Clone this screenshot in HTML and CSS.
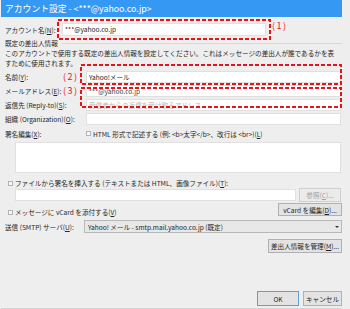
FILE: index.html
```html
<!DOCTYPE html>
<html lang="ja">
<head>
<meta charset="utf-8">
<title>アカウント設定</title>
<link rel="stylesheet" href="styles.css">
</head>
<body>
<div class="window">
  <div class="titlebar">アカウント設定 - &lt;***@yahoo.co.jp&gt;</div>
  <div class="content">
    <div class="account-row">
      <span class="acc-label">アカウント名(<u>N</u>):</span>
      <div class="field acc-field">***@yahoo.co.jp</div>
    </div>
    <div class="group-head"><span>既定の差出人情報</span><span class="rule"></span></div>
    <p class="desc">このアカウントで使用する既定の差出人情報を設定してください。これはメッセージの差出人が誰であるかを表<br>すために使用されます。</p>
    <div class="form-grid">
      <span class="lbl">名前(<u>Y</u>):</span><div class="field">Yahoo!メール</div>
      <span class="lbl">メールアドレス(<u>E</u>):</span><div class="field muted">***@yahoo.co.jp</div>
      <span class="lbl">返信先 (Reply-to)(<u>S</u>):</span><div class="field placeholder">受信者からの返信を受け取るアドレス</div>
      <span class="lbl">組織 (Organization)(<u>O</u>):</span><div class="field"></div>
    </div>
    <div class="sig-row">
      <span class="sig-label">署名編集(<u>X</u>):</span>
      <span class="check"><span class="box"></span>HTML 形式で記述する (例: &lt;b&gt;太字&lt;/b&gt;、改行は &lt;br&gt;)(<u>L</u>)</span>
    </div>
    <div class="textarea"></div>
    <div class="check-row"><span class="box"></span>ファイルから署名を挿入する (テキストまたは HTML、画像ファイル)(<u>T</u>):</div>
    <div class="file-row">
      <div class="field file-field"></div>
      <div class="btn disabled browse">参照(<u>C</u>)...</div>
    </div>
    <div class="vcard-row">
      <span class="check-inline"><span class="box"></span>メッセージに vCard を添付する(<u>V</u>)</span>
      <div class="btn vcard-btn">vCard を編集(<u>D</u>)...</div>
    </div>
    <div class="smtp-row">
      <span class="smtp-label">送信 (SMTP) サーバ(<u>U</u>):</span>
      <div class="select"><span>Yahoo! メール - smtp.mail.yahoo.co.jp (既定)</span><span class="arrow"></span></div>
    </div>
    <div class="manage-row">
      <div class="btn manage-btn">差出人情報を管理(<u>M</u>)...</div>
    </div>
    <div class="footer">
      <div class="btn ok-btn">OK</div>
      <div class="btn cancel-btn">キャンセル</div>
    </div>
  </div>

  <div class="redbox box1"><svg width="214" height="21"><rect x="1" y="1" width="212" height="19" class="dash"/></svg></div>
  <div class="redbox box2"><svg width="262" height="21"><rect x="1" y="1" width="260" height="19" class="dash"/></svg></div>
  <div class="redbox box3"><svg width="262" height="21"><rect x="1" y="1" width="260" height="19" class="dash"/></svg></div>
  <span class="redlabel l1">(1)</span>
  <span class="redlabel l2">(2)</span>
  <span class="redlabel l3">(3)</span>
</div>
</body>
</html>
```

FILE: styles.css
```css
* { box-sizing: border-box; }
html, body { margin: 0; padding: 0; }
body {
  background: #eeeeee;
  font-family: "Noto Sans CJK JP", "Noto Sans", sans-serif;
  font-size: 6.6px;
  color: #262626;
  overflow: hidden;
  width: 350px;
  height: 309px;
}
u { text-decoration: underline; }
.window {
  position: relative;
  width: 341px;
  height: 309px;
  margin-left: 1px;
  border-bottom: 1px solid #d4d4d4;
}
.titlebar {
  height: 17px;
  background: #3599f4;
  color: #fff;
  font-size: 8.8px;
  line-height: 17px;
  padding-left: 4px;
  white-space: nowrap;
}
.content {
  padding: 0 0 0 4px;
  width: 341px;
}
.field {
  height: 12px;
  background: #fff;
  border: 1px solid #e0e0e0;
  line-height: 10px;
  padding-left: 2px;
  color: #1e1e1e;
  white-space: nowrap;
  overflow: hidden;
}
.field.muted { color: #444; }
.field.placeholder { color: #b8b8b8; }
.account-row {
  display: flex;
  align-items: center;
  margin-top: 6px;
  height: 13px;
}
.acc-label { width: 57px; white-space: nowrap; }
.acc-field { width: 204px; height: 13px; line-height: 11px; }
.group-head {
  display: flex;
  align-items: center;
  gap: 4px;
  height: 10px;
  margin-top: 2px;
  line-height: 10px;
}
.rule { flex: 1; height: 1px; background: #d8d8d8; }
.desc {
  margin: 0 0 3px 0;
  line-height: 10px;
  white-space: nowrap;
}
.form-grid {
  display: grid;
  grid-template-columns: 81px 255px;
  row-gap: 2px;
  align-items: center;
}
.lbl { white-space: nowrap; line-height: 10px; }
.sig-row {
  display: flex;
  align-items: center;
  height: 11px;
  margin-top: 3px;
  white-space: nowrap;
}
.sig-label { width: 81px; }
.check { display: flex; align-items: center; }
.box {
  display: inline-block;
  width: 5px;
  height: 5px;
  border: 1px solid #b4b4b4;
  background: #f7f7f7;
  margin-right: 2px;
  flex: none;
}
.textarea {
  margin: 3px 0 0 10px;
  width: 326px;
  height: 31px;
  background: #fff;
  border: 1px solid #e0e0e0;
}
.check-row {
  display: flex;
  align-items: center;
  margin-top: 5px;
  height: 10px;
  padding-left: 3px;
  white-space: nowrap;
}
.file-row {
  display: flex;
  align-items: center;
  gap: 3px;
  margin-left: 10px;
  height: 14px;
}
.file-field { width: 281px; }
.btn {
  display: flex;
  align-items: center;
  justify-content: center;
  background: #e3e3e3;
  border: 1px solid #b0b0b0;
  color: #1e1e1e;
  white-space: nowrap;
  height: 14px;
}
.btn.disabled { color: #a0a0a0; border-color: #cfcfcf; background: #ebebeb; }
.browse { width: 42px; }
.vcard-row {
  display: flex;
  align-items: flex-end;
  justify-content: space-between;
  height: 14px;
  margin-top: 1px;
}
.check-inline {
  display: flex;
  align-items: center;
  padding-left: 3px;
  height: 10px;
  white-space: nowrap;
}
.vcard-btn { width: 64px; height: 13px; margin-bottom: 1px; }
.smtp-row {
  display: flex;
  align-items: center;
  margin-top: 3px;
  height: 13px;
}
.smtp-label { width: 79px; white-space: nowrap; }
.select {
  flex: 1;
  height: 13px;
  display: flex;
  align-items: center;
  justify-content: space-between;
  padding: 0 2px 0 3px;
  background: #e8e8e8;
  border: 1px solid #b8b8b8;
  color: #1e1e1e;
  white-space: nowrap;
}
.arrow {
  width: 0;
  height: 0;
  border-left: 2px solid transparent;
  border-right: 2px solid transparent;
  border-top: 2px solid #333;
}
.manage-row {
  display: flex;
  justify-content: flex-end;
  margin-top: 6px;
}
.manage-btn { width: 74px; }
.footer {
  display: flex;
  justify-content: flex-end;
  gap: 4px;
  margin-top: 38px;
}
.ok-btn { width: 42px; height: 15px; border-color: #5fa0d8; }
.cancel-btn { width: 39px; height: 15px; }

.redbox { position: absolute; line-height: 0; }
.redbox svg { display: block; }
.dash { fill: none; stroke: #e8141b; stroke-width: 2; stroke-dasharray: 4 2; }
.box1 { left: 56px; top: 19px; }
.box2 { left: 79px; top: 64px; }
.box3 { left: 79px; top: 87px; }
.redlabel {
  position: absolute;
  color: #e8141b;
  font-size: 9px;
  letter-spacing: 1.5px;
  line-height: 10px;
  white-space: nowrap;
}
.l1 { left: 271px; top: 21px; }
.l2 { left: 62px; top: 72px; }
.l3 { left: 62px; top: 86px; }
```
